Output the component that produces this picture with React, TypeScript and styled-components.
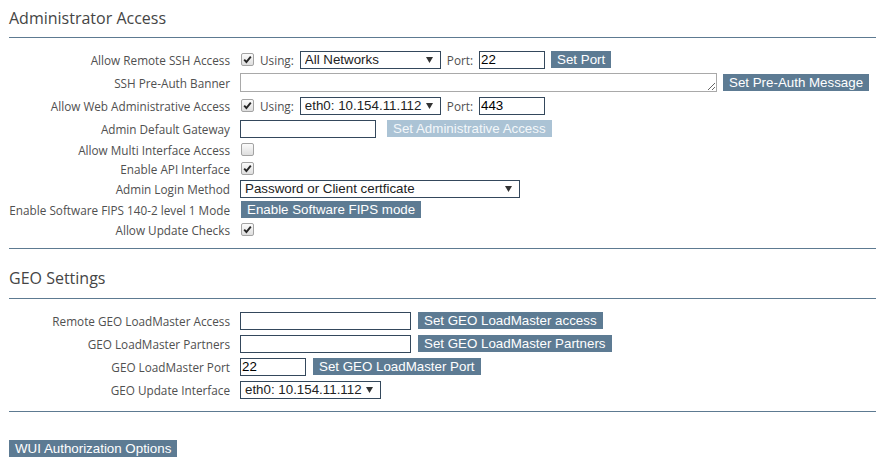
import styled, { createGlobalStyle } from 'styled-components'

const GlobalStyle = createGlobalStyle`
  html, body {
    margin: 0;
    background: #ffffff;
  }
  body {
    font-family: "Open Sans", "Noto Sans", sans-serif;
  }
`

const Page = styled.div`
  padding-left: 9px;
  width: 867px;
`

const SectionTitle = styled.h2<{ $first?: boolean }>`
  margin: 0;
  padding: ${p => (p.$first ? '7px 0 8px' : '18px 0 9px')};
  font-size: 16px;
  font-weight: 400;
  line-height: 22px;
  color: #454545;
  border-bottom: 1px solid #5d7a91;
`

const SectionBody = styled.div<{ $bottom: number }>`
  padding: 10px 0 ${p => p.$bottom}px;
  border-bottom: 1px solid #5d7a91;
`

const Row = styled.div<{ $h: number }>`
  display: flex;
  align-items: center;
  height: ${p => p.$h}px;
`

const Label = styled.div`
  flex-shrink: 0;
  width: 221px;
  padding-right: 10px;
  text-align: right;
  white-space: nowrap;
  font-size: 11.75px;
  color: #505050;
`

const Controls = styled.div<{ $gap?: number }>`
  display: flex;
  align-items: center;
  gap: ${p => p.$gap ?? 6}px;
`

const InlineLabel = styled.span`
  font-size: 11.75px;
  color: #505050;
`

const TextInput = styled.input<{ $w: number }>`
  display: block;
  box-sizing: border-box;
  width: ${p => p.$w}px;
  height: 18px;
  margin: 0;
  padding: 0 1px;
  border: 1px solid #34485c;
  border-radius: 0;
  font-family: "Liberation Sans", Arial, sans-serif;
  font-size: 13.333px;
  color: #000;
  outline: none;
`

const TextArea = styled.textarea`
  display: block;
  box-sizing: border-box;
  width: 477px;
  height: 19px;
  margin: 0;
  padding: 1px 2px;
  border: 1px solid #a9a9a9;
  font-family: "Liberation Sans", Arial, sans-serif;
  font-size: 13.333px;
  resize: both;
  outline: none;
`

const SelectWrap = styled.div<{ $w: number }>`
  position: relative;
  width: ${p => p.$w}px;
  height: 18px;
`

const Select = styled.select`
  display: block;
  appearance: none;
  box-sizing: border-box;
  width: 100%;
  height: 18px;
  margin: 0;
  padding: 0 18px 0 4px;
  border: 1px solid #34485c;
  border-radius: 0;
  background: #ffffff;
  font-family: "Liberation Sans", Arial, sans-serif;
  font-size: 13.333px;
  line-height: 16px;
  color: #222;
  outline: none;
`

const Arrow = styled.svg`
  position: absolute;
  right: 8px;
  top: 6px;
  pointer-events: none;
`

const Button = styled.button<{ $disabled?: boolean }>`
  display: block;
  height: 17px;
  margin: 0 0 0 ${p => (p.$disabled ? 5 : 0)}px;
  padding: 0 6px;
  border: none;
  border-radius: 0;
  background: ${p => (p.$disabled ? '#abc3d5' : '#5d7b93')};
  color: ${p => (p.$disabled ? '#f3f7fa' : '#ffffff')};
  font-family: "Liberation Sans", Arial, sans-serif;
  font-size: 13.333px;
  line-height: 17px;
  white-space: nowrap;
  cursor: pointer;
`

const WuiButton = styled(Button)`
  margin-top: 28px;
`

const CheckBox = styled.span`
  box-sizing: border-box;
  display: inline-flex;
  align-items: center;
  justify-content: center;
  width: 13px;
  height: 13px;
  margin-left: 1px;
  border: 1px solid #a3a3a3;
  border-radius: 2px;
  background: linear-gradient(#fbfbfb, #dedede);
`

const Check = ({ checked }: { checked?: boolean }) => (
  <CheckBox>
    {checked && (
      <svg width="9" height="9" viewBox="0 0 9 9">
        <path d="M1.2 4.6 L3.4 7 L7.8 1.6" fill="none" stroke="#262626" strokeWidth="1.9" />
      </svg>
    )}
  </CheckBox>
)

const Dropdown = ({ w, value }: { w: number; value: string }) => (
  <SelectWrap $w={w}>
    <Select defaultValue={value}>
      <option>{value}</option>
    </Select>
    <Arrow width="7" height="6" viewBox="0 0 7 6">
      <polygon points="0,0 7,0 3.5,6" fill="#333" />
    </Arrow>
  </SelectWrap>
)

const App = () => {
  return (
    <Page>
      <GlobalStyle />
      <section>
        <SectionTitle $first>Administrator Access</SectionTitle>
        <SectionBody $bottom={9}>
          <Row $h={23}>
            <Label>Allow Remote SSH Access</Label>
            <Controls>
              <Check checked />
              <InlineLabel>Using:</InlineLabel>
              <Dropdown w={141} value="All Networks" />
              <InlineLabel>Port:</InlineLabel>
              <TextInput $w={66} defaultValue="22" />
              <Button type="button">Set Port</Button>
            </Controls>
          </Row>
          <Row $h={23}>
            <Label>SSH Pre-Auth Banner</Label>
            <Controls>
              <TextArea rows={1} />
              <Button type="button">Set Pre-Auth Message</Button>
            </Controls>
          </Row>
          <Row $h={23}>
            <Label>Allow Web Administrative Access</Label>
            <Controls>
              <Check checked />
              <InlineLabel>Using:</InlineLabel>
              <Dropdown w={141} value="eth0: 10.154.11.112" />
              <InlineLabel>Port:</InlineLabel>
              <TextInput $w={66} defaultValue="443" />
            </Controls>
          </Row>
          <Row $h={23}>
            <Label>Admin Default Gateway</Label>
            <Controls>
              <TextInput $w={136} />
              <Button type="button" $disabled>Set Administrative Access</Button>
            </Controls>
          </Row>
          <Row $h={19}>
            <Label>Allow Multi Interface Access</Label>
            <Controls>
              <Check />
            </Controls>
          </Row>
          <Row $h={19}>
            <Label>Enable API Interface</Label>
            <Controls>
              <Check checked />
            </Controls>
          </Row>
          <Row $h={21}>
            <Label>Admin Login Method</Label>
            <Controls>
              <Dropdown w={280} value="Password or Client certficate" />
            </Controls>
          </Row>
          <Row $h={21}>
            <Label>Enable Software FIPS 140-2 level 1 Mode</Label>
            <Controls>
              <Button type="button" style={{ marginLeft: 1 }}>Enable Software FIPS mode</Button>
            </Controls>
          </Row>
          <Row $h={19}>
            <Label>Allow Update Checks</Label>
            <Controls>
              <Check checked />
            </Controls>
          </Row>
        </SectionBody>
      </section>

      <section>
        <SectionTitle>GEO Settings</SectionTitle>
        <SectionBody $bottom={10}>
          <Row $h={23}>
            <Label>Remote GEO LoadMaster Access</Label>
            <Controls $gap={7}>
              <TextInput $w={171} />
              <Button type="button">Set GEO LoadMaster access</Button>
            </Controls>
          </Row>
          <Row $h={23}>
            <Label>GEO LoadMaster Partners</Label>
            <Controls $gap={7}>
              <TextInput $w={171} />
              <Button type="button">Set GEO LoadMaster Partners</Button>
            </Controls>
          </Row>
          <Row $h={23}>
            <Label>GEO LoadMaster Port</Label>
            <Controls $gap={7}>
              <TextInput $w={66} defaultValue="22" />
              <Button type="button">Set GEO LoadMaster Port</Button>
            </Controls>
          </Row>
          <Row $h={23}>
            <Label>GEO Update Interface</Label>
            <Controls>
              <Dropdown w={141} value="eth0: 10.154.11.112" />
            </Controls>
          </Row>
        </SectionBody>
      </section>

      <WuiButton type="button">WUI Authorization Options</WuiButton>
    </Page>
  )
}

export default App
